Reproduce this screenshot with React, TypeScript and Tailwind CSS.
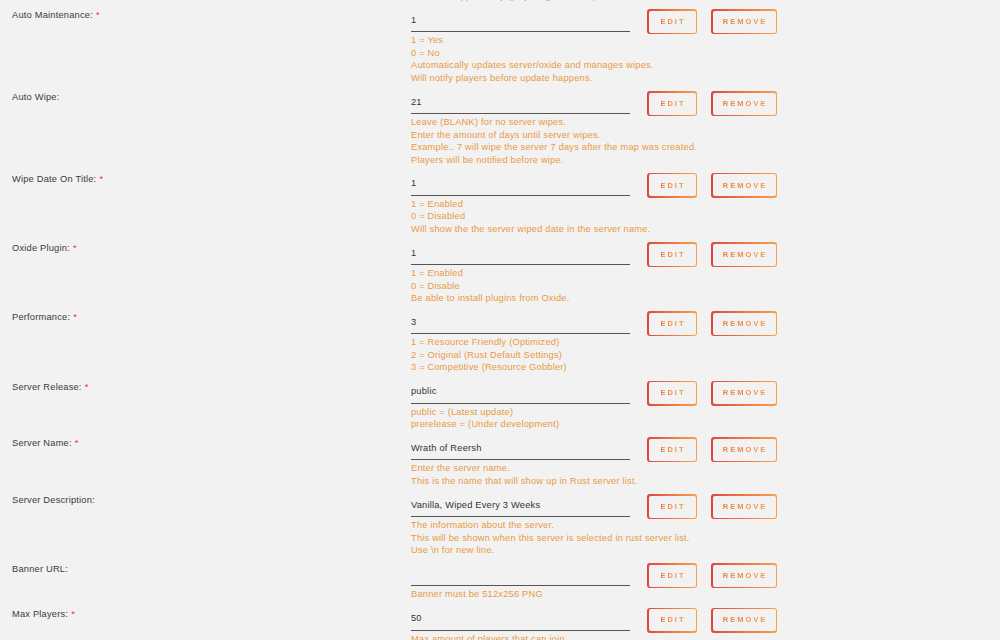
import React from "react";

type Field = {
  label: string;
  required?: boolean;
  value: string;
  help: string[];
};

const fields: Field[] = [
  {
    label: "Auto Maintenance:",
    required: true,
    value: "1",
    help: [
      "1 = Yes",
      "0 = No",
      "Automatically updates server/oxide and manages wipes.",
      "Will notify players before update happens.",
    ],
  },
  {
    label: "Auto Wipe:",
    value: "21",
    help: [
      "Leave (BLANK) for no server wipes.",
      "Enter the amount of days until server wipes.",
      "Example.. 7 will wipe the server 7 days after the map was created.",
      "Players will be notified before wipe.",
    ],
  },
  {
    label: "Wipe Date On Title:",
    required: true,
    value: "1",
    help: ["1 = Enabled", "0 = Disabled", "Will show the the server wiped date in the server name."],
  },
  {
    label: "Oxide Plugin:",
    required: true,
    value: "1",
    help: ["1 = Enabled", "0 = Disable", "Be able to install plugins from Oxide."],
  },
  {
    label: "Performance:",
    required: true,
    value: "3",
    help: [
      "1 = Resource Friendly (Optimized)",
      "2 = Original (Rust Default Settings)",
      "3 = Competitive (Resource Gobbler)",
    ],
  },
  {
    label: "Server Release:",
    required: true,
    value: "public",
    help: ["public = (Latest update)", "prerelease = (Under development)"],
  },
  {
    label: "Server Name:",
    required: true,
    value: "Wrath of Reersh",
    help: ["Enter the server name.", "This is the name that will show up in Rust server list."],
  },
  {
    label: "Server Description:",
    value: "Vanilla, Wiped Every 3 Weeks",
    help: [
      "The information about the server.",
      "This will be shown when this server is selected in rust server list.",
      "Use \\n for new line.",
    ],
  },
  {
    label: "Banner URL:",
    value: "",
    help: ["Banner must be 512x256 PNG"],
  },
  {
    label: "Max Players:",
    required: true,
    value: "50",
    help: ["Max amount of players that can join."],
  },
];

function OutlineButton({ text, width }: { text: string; width: string }) {
  return (
    <div className={`rounded-[3px] bg-gradient-to-r from-[#e0443e] to-[#f7a24a] p-[1.5px] ${width}`}>
      <div className="flex h-[22px] items-center justify-center rounded-[2px] bg-[#f2f2f2]">
        <span className="bg-gradient-to-r from-[#ec7a3e] to-[#f29a47] bg-clip-text pl-[2px] text-[7.5px] font-bold tracking-[2px] text-transparent">
          {text}
        </span>
      </div>
    </div>
  );
}

function FieldRow({ field }: { field: Field }) {
  return (
    <div className="flex items-start">
      <div className="w-[411px] shrink-0 pl-[12px] pt-[1px] text-[9.3px] leading-[10px] tracking-[0.2px] text-[#3a3a3a]">
        {field.label}
        {field.required && <span className="ml-[3px] text-[#e53935]">*</span>}
      </div>
      <div className="w-[219px] shrink-0">
        <div className="flex h-[23px] items-center border-b border-[#555] pt-[1px] text-[9.3px] tracking-[0.2px] text-[#333]">
          {field.value}
        </div>
        <div className="mt-[2px] text-[9.3px] leading-[12.5px] tracking-[0.2px] text-[#e99a44]">
          {field.help.map((line) => (
            <div key={line} className="whitespace-nowrap">
              {line}
            </div>
          ))}
        </div>
      </div>
      <div className="ml-[17px] flex gap-[14px]">
        <OutlineButton text="EDIT" width="w-[50px]" />
        <OutlineButton text="REMOVE" width="w-[66px]" />
      </div>
    </div>
  );
}

export default function App() {
  return (
    <div
      className="h-[640px] w-[1000px] overflow-hidden bg-[#f2f2f2]"
      style={{ fontFamily: '"Liberation Sans", Arial, sans-serif' }}
    >
      <div className="-mt-[10px] flex flex-col gap-[6.75px]">
        <div className="flex">
          <div className="w-[411px] shrink-0" />
          <div className="text-[9.3px] leading-[12.5px] tracking-[0.2px] text-[#e99a44]">
            Restarts happen daily (players get warned)
          </div>
        </div>
        {fields.map((f) => (
          <FieldRow key={f.label} field={f} />
        ))}
      </div>
    </div>
  );
}
